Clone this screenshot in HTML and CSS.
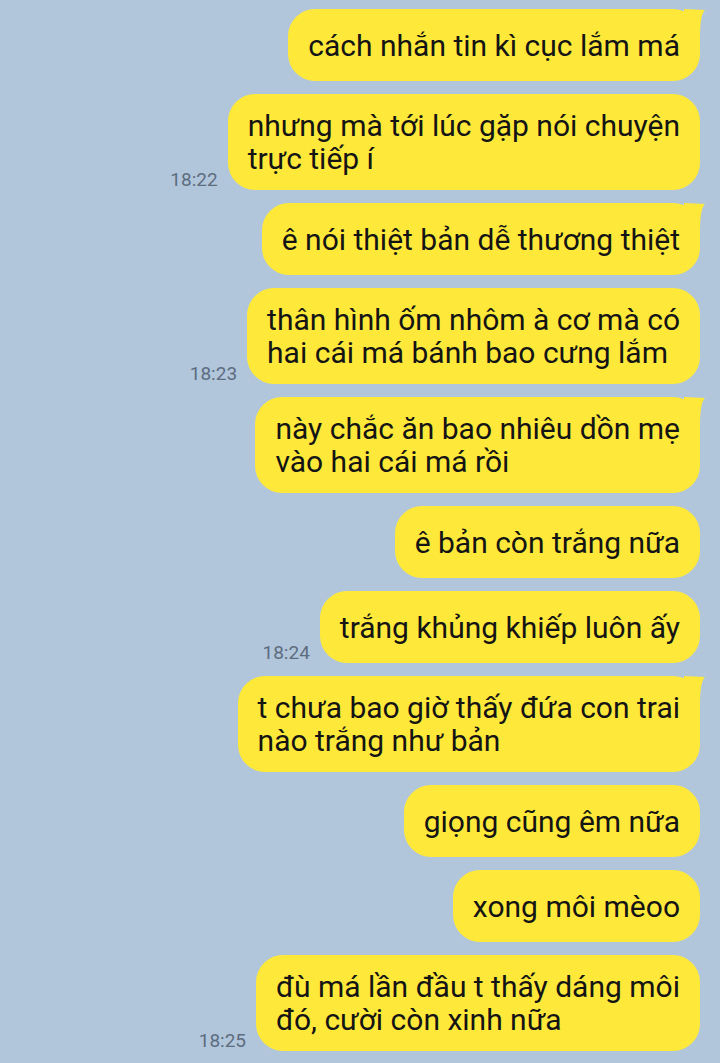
FILE: index.html
```html
<!DOCTYPE html>
<html lang="vi">
<head>
    <meta charset="UTF-8">
    <meta name="viewport" content="width=device-width, initial-scale=1.0">
    <title>Chat</title>
    <link rel="stylesheet" href="styles.css">
</head>
<body>
    <div class="chat">
        <div class="row">
            <div class="bubble tail">cách nhắn tin kì cục lắm má</div>
        </div>
        <div class="row">
            <span class="time">18:22</span>
            <div class="bubble">nhưng mà tới lúc gặp nói chuyện<br>trực tiếp í</div>
        </div>
        <div class="row">
            <div class="bubble tail">ê nói thiệt bản dễ thương thiệt</div>
        </div>
        <div class="row">
            <span class="time">18:23</span>
            <div class="bubble">thân hình ốm nhôm à cơ mà có<br>hai cái má bánh bao cưng lắm</div>
        </div>
        <div class="row">
            <div class="bubble tail">này chắc ăn bao nhiêu dồn mẹ<br>vào hai cái má rồi</div>
        </div>
        <div class="row">
            <div class="bubble">ê bản còn trắng nữa</div>
        </div>
        <div class="row">
            <span class="time">18:24</span>
            <div class="bubble">trắng khủng khiếp luôn ấy</div>
        </div>
        <div class="row">
            <div class="bubble tail">t chưa bao giờ thấy đứa con trai<br>nào trắng như bản</div>
        </div>
        <div class="row">
            <div class="bubble">giọng cũng êm nữa</div>
        </div>
        <div class="row">
            <div class="bubble">xong môi mèoo</div>
        </div>
        <div class="row">
            <span class="time">18:25</span>
            <div class="bubble">đù má lần đầu t thấy dáng môi<br>đó, cười còn xinh nữa</div>
        </div>
    </div>
</body>
</html>
```

FILE: styles.css
```css
* {
    margin: 0;
    padding: 0;
    box-sizing: border-box;
}

body {
    background: #b1c5db;
    font-family: Roboto, "Liberation Sans", sans-serif;
    height: 100vh;
    overflow: hidden;
}

.chat {
    display: flex;
    flex-direction: column;
    gap: 13px;
    padding: 9px 20px 0 0;
}

.row {
    display: flex;
    justify-content: flex-end;
    align-items: flex-end;
    gap: 10px;
}

.time {
    font-size: 19px;
    line-height: 20px;
    color: #5d6d80;
}

.bubble {
    position: relative;
    display: flex;
    align-items: center;
    min-height: 72px;
    padding: 15px 20px;
    background: #fee93b;
    border-radius: 27px;
    font-size: 30px;
    line-height: 33px;
    color: #141414;
    white-space: nowrap;
}

/* little pointed corner on the first message of a group */
.bubble.tail::after {
    content: '';
    position: absolute;
    top: 0;
    right: -6px;
    width: 22px;
    height: 28px;
    background: #fee93b;
    clip-path: path('M0 0 L21 1 Q16 6 16 28 L0 28 Z');
}
```
